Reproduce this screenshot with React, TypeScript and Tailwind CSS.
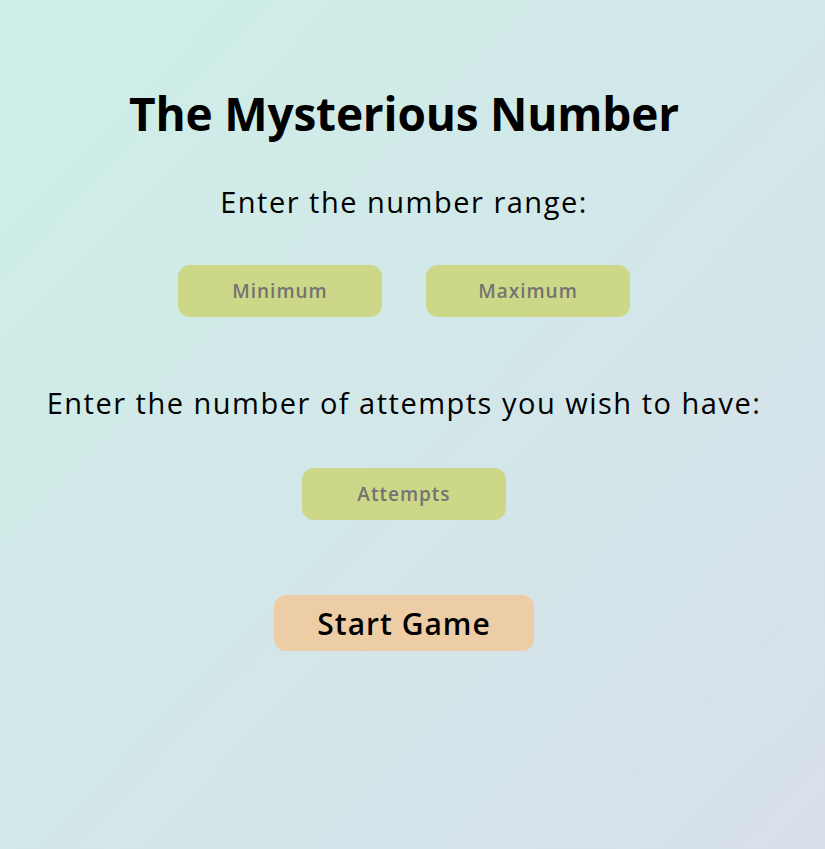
import React from "react";

export default function App() {
  const inputCls =
    "w-[204px] h-[52px] rounded-[12px] bg-[#ccd787] text-center text-[19px] tracking-[1px] font-semibold placeholder:text-[#737373] outline-none";
  return (
    <div
      className="min-h-[849px] w-full bg-gradient-to-br from-[#cdefe7] to-[#d7dfeb] text-black"
      style={{ fontFamily: '"Open Sans", "Noto Sans", sans-serif' }}
    >
      <div className="w-[808px] flex flex-col items-center">
        <h1 className="mt-[85px] text-[46px] leading-[56px] font-bold tracking-[-0.2px]">
          The Mysterious Number
        </h1>
        <p className="mt-[43px] text-[29px] leading-[36px] tracking-[1.5px]">
          Enter the number range:
        </p>
        <div className="mt-[45px] flex gap-[44px]">
          <input placeholder="Minimum" className={inputCls} />
          <input placeholder="Maximum" className={inputCls} />
        </div>
        <p className="mt-[68px] text-[29px] leading-[36px] tracking-[1.5px]">
          Enter the number of attempts you wish to have:
        </p>
        <input placeholder="Attempts" className={"mt-[47px] " + inputCls} />
        <button className="mt-[75px] w-[260px] h-[56px] rounded-[12px] bg-[#edcda5] text-[30px] tracking-[1px] font-semibold text-black">
          Start Game
        </button>
      </div>
    </div>
  );
}
